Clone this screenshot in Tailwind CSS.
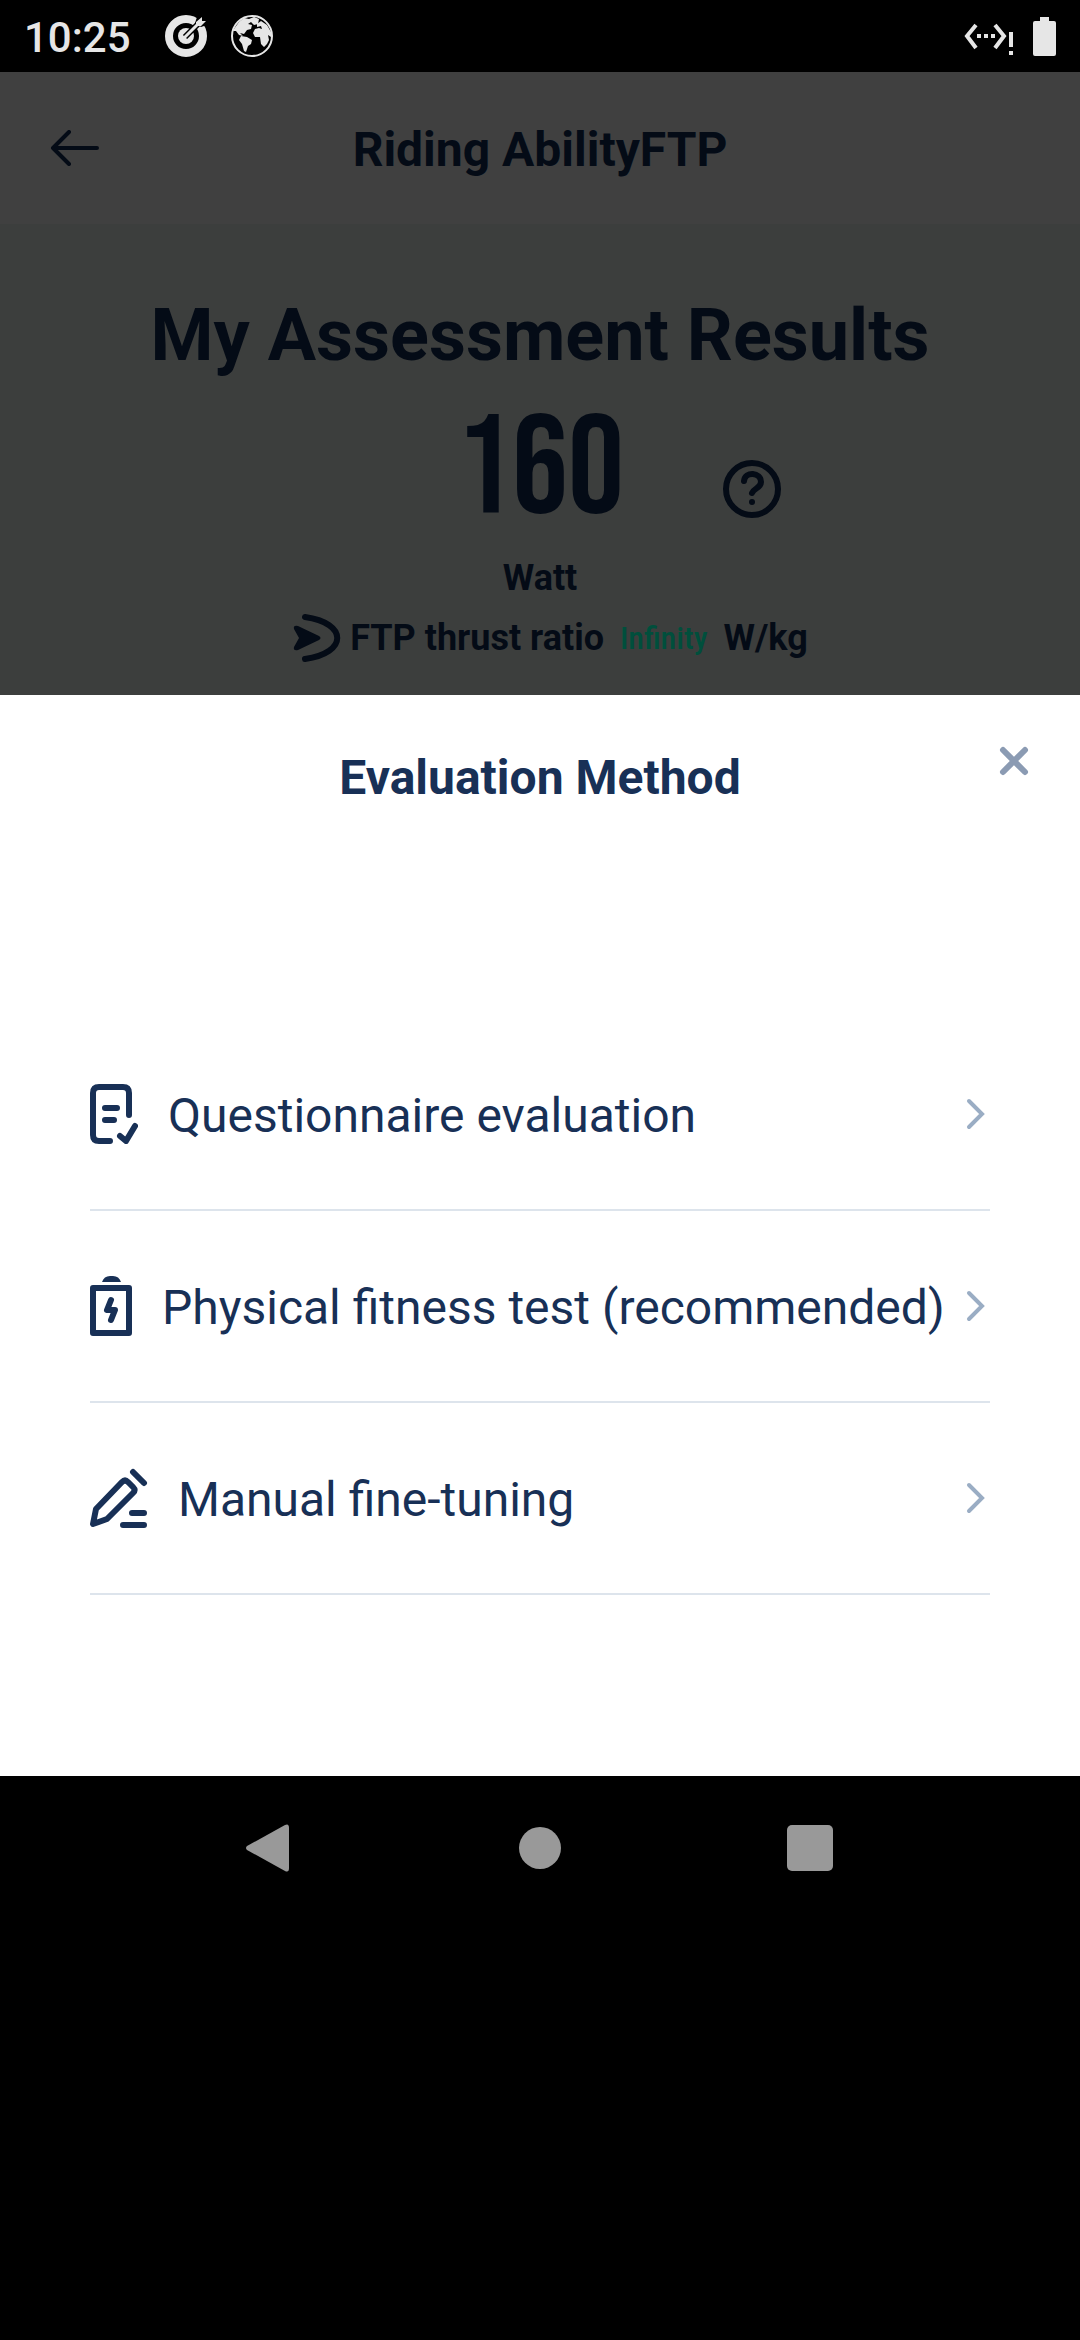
<!DOCTYPE html>
<html lang="en">
<head>
<meta charset="utf-8">
<meta name="viewport" content="width=device-width, initial-scale=1">
<title>Riding Ability FTP</title>
<script src="https://cdn.jsdelivr.net/npm/@tailwindcss/browser@4"></script>
</head>
<body class="flex min-h-screen flex-col bg-black font-['Roboto',sans-serif] text-[#183056]">

<!-- Status bar -->
<div class="flex h-[72px] items-center justify-between pr-6 pl-6 text-[#e6e6e6]">
  <div class="flex items-center">
    <span class="pt-1 text-[42px] leading-[48px] font-medium">10:25</span>
    <svg class="ml-[34px] h-[42px] w-[42px]" viewBox="0 0 42 42" fill="none">
      <circle cx="21" cy="21" r="17" stroke="currentColor" stroke-width="8"/>
      <circle cx="21" cy="21" r="8" fill="currentColor"/>
      <path d="M20 22 33 9" stroke="#000" stroke-width="6"/>
      <path d="M32 2 42 0 42 10 36 12 30 8z" fill="#000"/>
      <path d="M20 22 34 8" stroke="currentColor" stroke-width="3" stroke-linecap="round"/>
      <path d="M31 11V7l6-5v4h4l-5 5z" fill="currentColor"/>
    </svg>
    <svg class="ml-6 h-[42px] w-[42px]" viewBox="0 0 42 42" fill="none">
      <circle cx="21" cy="21" r="20" stroke="currentColor" stroke-width="2"/>
      <path d="M3 14 8 7l5-4 5 1 5-2 5 2-1 5-4 1-3-3-3 2 4 1-1 4-4 1-3 4-4-1 3 3-4-1-3-4-3 0z" fill="currentColor"/>
      <path d="M10 21l6 1 5 3-1 4-3 2-2 6-2-1-2-7-3-4z" fill="currentColor"/>
      <path d="M26 9l4-3 6 4 4 7 0 5-3-2 1 5-2 4-3 3-3-3-1-7-5 0-2-4 2-4 4-1 3 1-1-3-4 1z" fill="currentColor"/>
    </svg>
  </div>
  <div class="flex items-center gap-5">
    <svg class="h-10 w-[50px]" viewBox="0 0 50 40" fill="none">
      <path d="M13 9 4 20l9 12M32 9l9 11-9 12" stroke="currentColor" stroke-width="4"/>
      <path d="M14 18h4v4h-4zM21 18h4v4h-4zM28 18h4v4h-4zM46 16h4v15h-4zM46 35h4v4h-4z" fill="currentColor"/>
    </svg>
    <svg class="h-[39px] w-[23px]" viewBox="0 0 23 39" fill="currentColor">
      <path d="M7 0h9v4h5a2 2 0 0 1 2 2v31a2 2 0 0 1-2 2H2a2 2 0 0 1-2-2V6a2 2 0 0 1 2-2h5z"/>
    </svg>
  </div>
</div>

<!-- Dimmed page behind the sheet -->
<header class="grid h-[152px] grid-cols-[1fr_auto_1fr] items-center bg-[#404040] text-[#040b16]">
  <button type="button" aria-label="Back" class="ml-[50px] w-[50px]">
    <svg class="h-9 w-[50px]" viewBox="0 0 50 36" fill="none" stroke="currentColor" stroke-width="4" stroke-linecap="round" stroke-linejoin="round"><path d="M19 2 3 18l16 16M3 18h44"/></svg>
  </button>
  <h1 class="pt-1 text-[48px] leading-[56px] font-bold">Riding AbilityFTP</h1>
</header>
<main class="flex h-[471px] flex-col items-center bg-[#3c3e3d] pt-[70px] text-[#040b16]">
  <h2 class="text-[72px] leading-[84px] font-bold">My Assessment Results</h2>
  <div class="grid w-full grid-cols-[1fr_auto_1fr] items-center pt-4">
    <span></span>
    <span class="font-['Bebas_Neue','Liberation_Sans_Narrow','Roboto',sans-serif] text-[140px] leading-[154px]">160</span>
    <button type="button" aria-label="About FTP" class="mt-9 ml-[98px] w-[60px]">
      <svg class="h-[60px] w-[60px]" viewBox="0 0 60 60" fill="none" stroke="currentColor" stroke-width="6" stroke-linecap="round"><circle cx="30" cy="30" r="26"/><path d="M22 22c1-10 17-9 17 1 0 6-7 6-9 11"/><circle cx="30" cy="43" r="3" fill="currentColor" stroke="none"/></svg>
    </button>
  </div>
  <p class="text-[36px] leading-[60px] font-bold">Watt</p>
  <div class="flex items-center pl-5 text-[36px] leading-[60px] font-bold">
    <svg class="mr-2 h-[50px] w-[50px]" viewBox="0 0 50 50" fill="none"><path d="M13 4c43 6 43 36 0 42" stroke="currentColor" stroke-width="6" stroke-linecap="round"/><path d="M6 13 27 23q3 2 0 4L6 37q-5 1-4-3l5-9-5-9q-1-4 4-3z" fill="currentColor"/></svg>
    <span>FTP thrust ratio</span>
    <span class="mx-4 font-['Roboto_Condensed','Liberation_Sans_Narrow','Roboto',sans-serif] text-[32px] font-medium text-[#004f3c]">Infinity</span>
    <span>W/kg</span>
  </div>
</main>

<!-- Bottom sheet -->
<section aria-labelledby="sheet-title" class="bg-white px-[90px] pb-[181px]">
  <div class="relative flex h-[324px] justify-center pt-[55px]">
    <h2 id="sheet-title" class="text-[48px] leading-[56px] font-bold">Evaluation Method</h2>
    <button type="button" aria-label="Close" class="absolute top-[50px] -right-10 text-[#8b9bb3]">
      <svg class="h-8 w-8" viewBox="0 0 32 32" fill="none" stroke="currentColor" stroke-width="6" stroke-linecap="round"><path d="m5 5 22 22M27 5 5 27"/></svg>
    </button>
  </div>
  <ul class="text-[48px] leading-[56px]">
    <li><button type="button" class="flex h-48 w-full items-center border-b-2 border-[#dde4ec] text-left">
      <svg class="h-[60px] w-12 shrink-0" viewBox="0 0 48 60" fill="none" stroke="currentColor" stroke-width="6" stroke-linecap="round" stroke-linejoin="round"><path d="M39 31V9q0-6-6-6H9Q3 3 3 9v42q0 6 6 6h11M15 24h12M15 36h9M30 52l6 5 9-15"/></svg>
      <span class="ml-[30px] grow pt-[3px]">Questionnaire evaluation</span>
      <svg class="h-9 w-6 shrink-0 text-[#9aadc4]" viewBox="0 0 24 36" fill="none" stroke="currentColor" stroke-width="4" stroke-linecap="round"><path d="m3 5 13 13L3 31"/></svg>
    </button></li>
    <li><button type="button" class="flex h-48 w-full items-center border-b-2 border-[#dde4ec] text-left">
      <svg class="h-[60px] w-[42px] shrink-0" viewBox="0 0 42 60" fill="none" stroke="currentColor" stroke-width="6" stroke-linecap="round" stroke-linejoin="round"><path d="M3 12h36v45H3z"/><path d="M12 6q2-6 8-6h3q6 0 8 6z" fill="currentColor" stroke="none"/><path d="M21 24l-4 10h8l-4 10"/></svg>
      <span class="ml-[30px] grow pt-[3px]">Physical fitness test (recommended)</span>
      <svg class="h-9 w-6 shrink-0 text-[#9aadc4]" viewBox="0 0 24 36" fill="none" stroke="currentColor" stroke-width="4" stroke-linecap="round"><path d="m3 5 13 13L3 31"/></svg>
    </button></li>
    <li><button type="button" class="flex h-48 w-full items-center border-b-2 border-[#dde4ec] text-left">
      <svg class="h-[60px] w-[58px] shrink-0" viewBox="0 0 58 60" fill="none" stroke="currentColor" stroke-width="6" stroke-linecap="round" stroke-linejoin="round"><path d="M3 56 6 41 32 14q3-3 6 0l5 5q3 3 0 6L17 51zM43 4l11 11M42 45h12M33 57h21"/></svg>
      <span class="ml-[30px] grow pt-[3px]">Manual fine-tuning</span>
      <svg class="h-9 w-6 shrink-0 text-[#9aadc4]" viewBox="0 0 24 36" fill="none" stroke="currentColor" stroke-width="4" stroke-linecap="round"><path d="m3 5 13 13L3 31"/></svg>
    </button></li>
  </ul>
</section>

<!-- System navigation -->
<nav aria-label="System" class="mx-auto grid h-36 w-3/4 grid-cols-3 place-items-center text-[#999999]">
  <button type="button" aria-label="Back"><svg class="h-12 w-12" viewBox="0 0 48 48" fill="currentColor"><path d="M1 22 39 1q4-2 4 3v40q0 5-4 3L1 26q-2-2 0-4z"/></svg></button>
  <button type="button" aria-label="Home" class="size-[42px] rounded-full bg-[#999999]"></button>
  <button type="button" aria-label="Recent apps" class="size-[46px] rounded-[5px] bg-[#999999]"></button>
</nav>
</body>
</html>
